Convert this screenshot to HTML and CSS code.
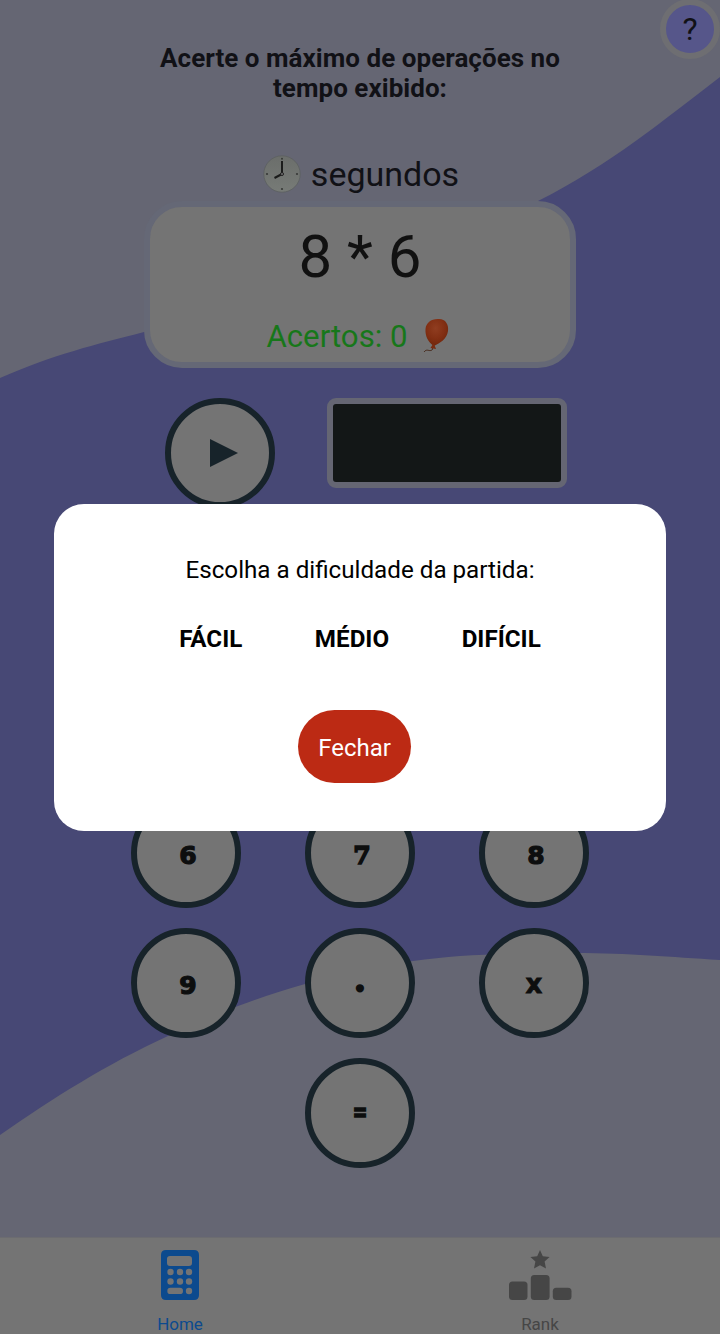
FILE: index.html
```html
<!DOCTYPE html>
<html lang="pt-BR">
<head>
<meta charset="utf-8">
<title>Operações</title>
<link rel="stylesheet" href="styles.css">
</head>
<body>
<div class="app">
  <svg class="waves" viewBox="0 0 720 1238" aria-hidden="true">
    <path d="M0 378C55 354 94 345 144 332C290 299 420 263 538 201C610 165 665 119 720 77V960C670 957 630 953 575 953C510 953 462 954 413 961C370 968 342 974 305 984C280 991 260 998 238 1006C215 1015 185 1026 168 1036C105 1065 55 1097 0 1135Z"/>
  </svg>
  <button class="help">?</button>
  <main class="game">
    <h1 class="title">Acerte o máximo de operações no tempo exibido:</h1>
    <div class="timer">
      <svg class="clock" viewBox="0 0 38 38" aria-hidden="true">
        <defs><linearGradient id="face" x1="0" y1="0" x2="0" y2="1"><stop stop-color="#6b6e6b"/><stop offset="1" stop-color="#777b77"/></linearGradient></defs>
        <circle cx="19" cy="19" r="18.2" fill="url(#face)" stroke="#5c605f" stroke-width=".8"/>
        <path d="M19 19V6M19 19L11.5 23" stroke="#1b1c1b" stroke-width="2" fill="none"/>
        <circle cx="19" cy="19" r="1.5" fill="#777" stroke="#202020"/>
        <g fill="#373a37"><circle cx="19" cy="3.7" r="1"/><circle cx="34" cy="19" r="1.1"/><circle cx="19" cy="34" r="1.1"/><circle cx="4" cy="19" r="1.1"/></g>
      </svg>
      <span>segundos</span>
    </div>
    <section class="question">
      <div class="operation">8 * 6</div>
      <div class="score"><span>Acertos: 0</span>
        <svg class="balloon" viewBox="0 0 28 36" aria-hidden="true">
          <defs><radialGradient id="rubber" cx=".45" cy=".35" r=".7"><stop stop-color="#903d20"/><stop offset=".55" stop-color="#822f13"/><stop offset="1" stop-color="#6d240a"/></radialGradient></defs>
          <path d="M10 28C8 29 11 31 9 32C6 34 4 30 1 34" fill="none" stroke="#4b3023" stroke-width="1"/>
          <path d="M14.5 1C22 0 26 6 25 13C24 21 17 25 11 28C5 24 2 18 2.500 11C3 5 8 1 14.500 1Z" fill="url(#rubber)"/>
          <path d="M10 26L7.500 30L13 31L11 26Z" fill="#792b10"/>
        </svg>
      </div>
    </section>
    <div class="controls">
      <button class="key" aria-label="Iniciar"><svg class="play" viewBox="0 0 28 30"><path d="M0 1L28 15L0 29Z"/></svg></button>
      <div class="display"></div>
    </div>
    <div class="keypad">
      <button class="key"><span class="digit">6</span></button>
      <button class="key"><span class="digit slab">7</span></button>
      <button class="key"><span class="digit">8</span></button>
      <button class="key"><span class="digit">9</span></button>
      <button class="key"><span class="point">.</span></button>
      <button class="key"><span class="times">x</span></button>
      <button class="key equals"><span class="equal-sign">=</span></button>
    </div>
  </main>
  <nav class="tabs">
    <a class="tab active">
      <svg class="tab-icon" viewBox="0 0 64 52" aria-hidden="true">
        <path fill-rule="evenodd" d="M18 1H46Q51 1 51 6V46Q51 51 46 51H18Q13 51 13 46V6Q13 1 18 1ZM22 7Q19 7 19 10V14Q19 17 22 17H41Q44 17 44 14V10Q44 7 41 7Z"/>
        <g class="holes"><circle cx="22.500" cy="23" r="3.200"/><circle cx="32" cy="23" r="3.200"/><circle cx="41" cy="23" r="3.200"/><circle cx="22.500" cy="32.500" r="3.200"/><circle cx="32" cy="32.500" r="3.200"/><circle cx="41" cy="32.500" r="3.200"/><rect x="19.300" y="38.700" width="15.700" height="6.400" rx="3.200"/><circle cx="41" cy="42" r="3.200"/></g>
      </svg>
      <span>Home</span>
    </a>
    <a class="tab">
      <svg class="tab-icon" viewBox="0 0 64 52" aria-hidden="true">
        <path d="M32 1L34.800 7.200L41.600 8L36.600 12.600L38 19.500L32 16.200L26 19.500L27.400 12.600L22.400 8L29.200 7.200Z"/>
        <rect x="1" y="32.500" width="18.500" height="18.500" rx="3.500"/><rect x="22.800" y="26" width="18.800" height="25" rx="3.500"/><rect x="44.800" y="38.700" width="18.700" height="12.300" rx="3.500"/>
      </svg>
      <span>Rank</span>
    </a>
  </nav>
  <div class="overlay">
    <div class="modal" role="dialog">
      <p class="prompt">Escolha a dificuldade da partida:</p>
      <div class="levels"><button>FÁCIL</button><button>MÉDIO</button><button>DIFÍCIL</button></div>
      <button class="close">Fechar</button>
    </div>
  </div>
</div>
</body>
</html>
```

FILE: styles.css
```css
* { box-sizing: border-box; }
body { margin: 0; font-family: Roboto, "Liberation Sans", sans-serif; color: #111116; }
button { font: inherit; color: inherit; border: 0; padding: 0; background: none; }
.app { position: relative; width: 720px; height: 1334px; overflow: hidden; background: #656673; display: flex; flex-direction: column; }
.waves { position: absolute; left: 0; top: 0; width: 720px; height: 1238px; fill: #474875; }
.help { position: absolute; right: 0; top: -1px; width: 60px; height: 60px; border: 6px solid #6e6e72; border-radius: 50%; background: #56568a; font-size: 32px; line-height: 48px; }
.game { position: relative; flex: 1; display: flex; flex-direction: column; align-items: center; padding-top: 43px; }
.title { margin: 0; width: 420px; height: 60px; text-align: center; font-size: 26px; line-height: 30px; font-weight: 700; letter-spacing: .04px; }
.timer { display: flex; align-items: center; gap: 10px; height: 44px; margin: 49px 0 0 2px; font-size: 34px; }
.clock { width: 38px; height: 38px; }
.question { width: 432px; height: 167px; margin-top: 5px; border: 6px solid #656876; border-radius: 38px; background: #747474; text-align: center; }
.operation { padding-top: 12px; height: 106px; font-size: 60px; line-height: 76px; color: #111; }
.score { display: flex; justify-content: center; align-items: center; gap: 15px; height: 46px; padding-right: 3px; font-size: 31.2px; color: #17771a; }
.balloon { width: 28px; height: 36px; }
.controls { display: flex; gap: 52px; margin: 30px 0 0 12px; width: 402px; height: 110px; }
.key { flex: none; display: flex; align-items: center; justify-content: center; width: 110px; height: 110px; border: 6.5px solid #17232a; border-radius: 50%; background: #747474; }
.play { width: 28px; height: 30px; fill: #17232a; margin-left: 8px; }
.display { flex: none; width: 240px; height: 90px; border: 6px solid #656673; border-radius: 9px; background: #131717; }
.keypad { display: grid; grid-template-columns: repeat(3, 110px); gap: 20px 64px; margin-top: 290px; font-family: "DejaVu Sans", sans-serif; font-weight: 700; color: #0d0e0e; }
.digit { font-size: 25px; padding: 4px 0 0 4px; -webkit-text-stroke: 1.2px #0d0e0e; }
.slab { font-family: "DejaVu Serif", serif; -webkit-text-stroke-width: 1.7px; }
.point { font-family: "DejaVu Serif", serif; font-size: 44px; line-height: 38px; margin-top: -12px; }
.times { font-size: 26px; line-height: 30px; margin-top: 1px; -webkit-text-stroke: .8px #0d0e0e; }
.equals { grid-column: 2; }
.equal-sign { width: 14px; font-size: 18px; line-height: 20px; -webkit-text-stroke: .9px #0d0e0e; display: flex; justify-content: center; transform: scaleY(1.5); margin-top: -2px; }
.tabs { position: relative; display: flex; height: 97px; background: #747474; border-top: 1px solid #6c6c70; }
.tab { flex: 1; display: flex; flex-direction: column; align-items: center; padding-top: 11px; font-size: 17px; line-height: 20px; color: #464646; fill: currentColor; }
.tab.active { color: #0c4a8e; }
.tab-icon { width: 64px; height: 52px; margin-bottom: 13px; }
.holes { fill: #747474; }
.overlay { position: absolute; inset: 0; display: flex; align-items: center; justify-content: center; }
.modal { width: 612px; height: 327px; border-radius: 30px; background: #fff; color: #000; display: flex; flex-direction: column; align-items: center; padding-top: 50px; }
.prompt { margin: 0; font-size: 24.2px; line-height: 32px; }
.levels { display: flex; gap: 72.5px; margin-top: 38px; font-size: 24.2px; line-height: 30px; font-weight: 700; }
.close { width: 113px; height: 73px; margin: 56px 11px 0 0; border-radius: 37px; background: #bc2a14; color: #fff; font-size: 24px; padding-top: 3px; }
```
